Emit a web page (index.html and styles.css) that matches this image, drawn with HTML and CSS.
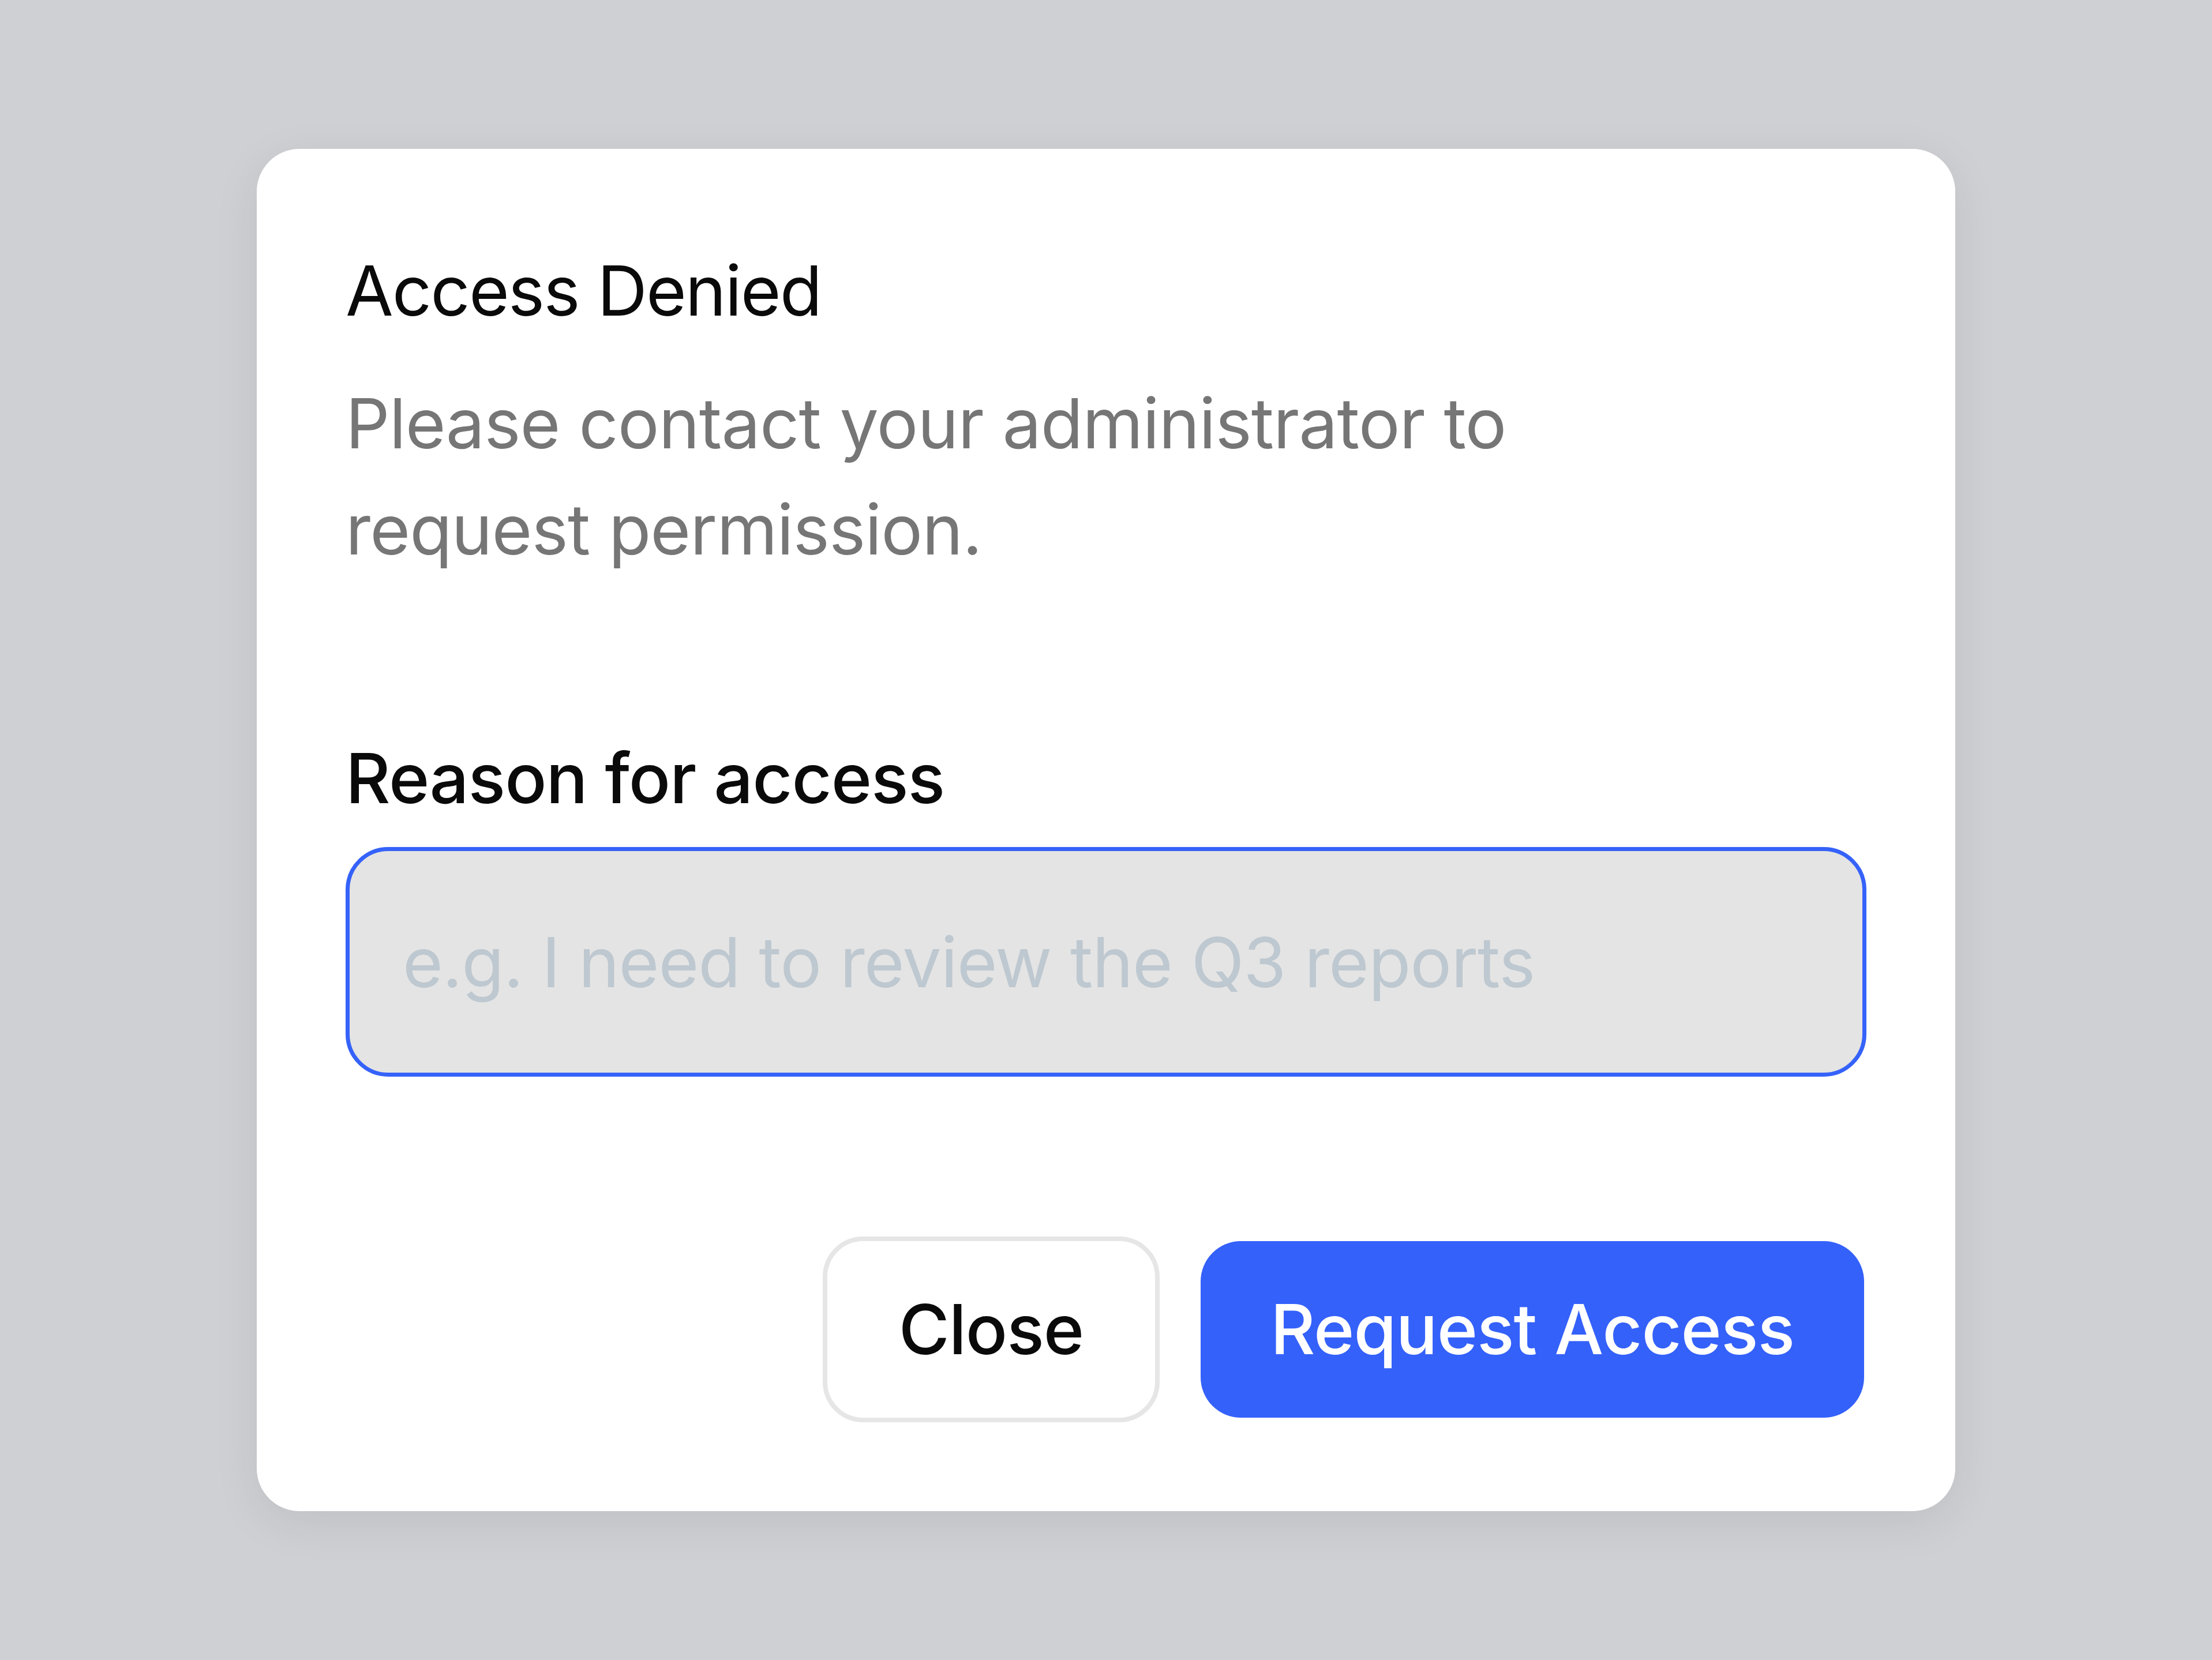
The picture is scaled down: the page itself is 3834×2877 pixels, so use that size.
FILE: index.html
```html
<!DOCTYPE html>
<html lang="en">
<head>
    <meta charset="UTF-8">
    <meta name="viewport" content="width=device-width, initial-scale=1.0">
    <title>Access Denied</title>
    <link rel="stylesheet" href="styles.css">
</head>
<body>

    <div class="dialog">
        <h1 class="dialog-title">Access Denied</h1>
        <p class="dialog-text">Please contact your administrator to<br>request permission.</p>

        <form class="request-form" onsubmit="return false">
            <label class="field-label" for="reason">Reason for access</label>
            <input type="text" id="reason" class="field-input" placeholder="e.g. I need to review the Q3 reports">

            <div class="dialog-actions">
                <button type="button" class="btn btn-secondary">Close</button>
                <button type="submit" class="btn btn-primary">Request Access</button>
            </div>
        </form>
    </div>

</body>
</html>
```

FILE: styles.css
```css
html, body {
    height: 100%;
}

body {
    margin: 0;
    font-family: Inter, "Noto Sans", sans-serif;
    letter-spacing: -1.1px;
    background-color: #cfd0d4;
    display: flex;
    align-items: center;
    justify-content: center;
}

.dialog {
    width: 2944px;
    box-sizing: border-box;
    padding: 154px;
    background-color: #fff;
    border-radius: 74px;
    box-shadow: 0 20px 80px rgba(0, 0, 0, 0.08);
}

.dialog-title {
    margin: 0 0 46px;
    font-size: 120px;
    font-weight: 400;
    line-height: 184px;
    letter-spacing: -2px;
    color: #0a0a0a;
}

.dialog-text {
    margin: 0;
    font-size: 120px;
    line-height: 184px;
    letter-spacing: -1px;
    color: #767676;
}

.request-form {
    margin-top: 247px;
}

.field-label {
    display: block;
    font-size: 120px;
    font-weight: 500;
    line-height: 184px;
    color: #0a0a0a;
}

.field-input {
    display: block;
    width: 100%;
    height: 398px;
    box-sizing: border-box;
    margin-top: 27px;
    padding: 0 92px;
    font-family: inherit;
    font-size: 120px;
    letter-spacing: inherit;
    color: #0a0a0a;
    background-color: #e4e4e4;
    border: 7px solid #3562f9;
    border-radius: 74px;
    outline: none;
}

.field-input::placeholder {
    color: #bec8d0;
}

.dialog-actions {
    display: flex;
    justify-content: flex-end;
    align-items: center;
    gap: 71px;
    margin-top: 277px;
    padding-right: 4px;
}

.btn {
    font-family: inherit;
    font-size: 120px;
    font-weight: 500;
    line-height: 146px;
    letter-spacing: inherit;
    padding: 80px 121px;
    border-radius: 70px;
    cursor: pointer;
}

.btn-secondary {
    padding-left: 124px;
    padding-right: 124px;
    color: #0a0a0a;
    background-color: #fff;
    border: 8px solid #e6e6e6;
}

.btn-primary {
    color: #fff;
    background-color: #3461fa;
    border: none;
}
```
